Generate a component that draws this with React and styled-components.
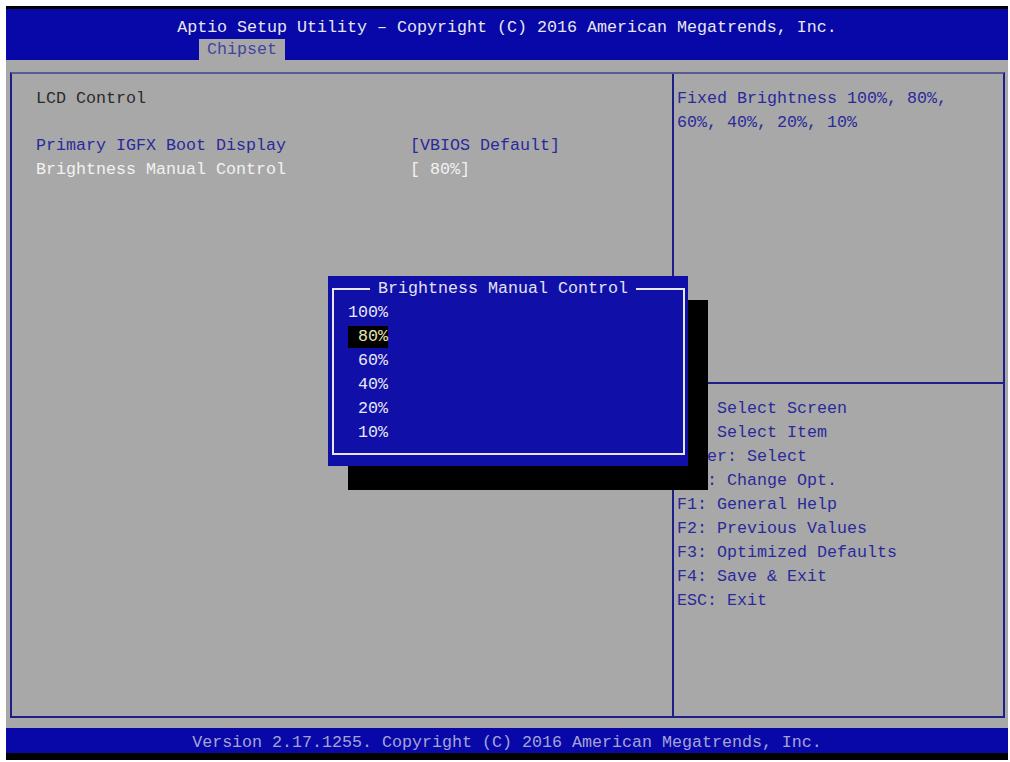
import React from "react";
import styled, { createGlobalStyle } from "styled-components";

const GlobalStyle = createGlobalStyle`
  html, body { margin: 0; padding: 0; background: #fff; }
  * { box-sizing: border-box; }
`;

const items = [
  { label: "Primary IGFX Boot Display", value: "[VBIOS Default]" },
  { label: "Brightness Manual Control", value: "[ 80%]", active: true },
];

const helpKeys = [
  "→←: Select Screen",
  "↑↓: Select Item",
  "Enter: Select",
  "+/-: Change Opt.",
  "F1: General Help",
  "F2: Previous Values",
  "F3: Optimized Defaults",
  "F4: Save & Exit",
  "ESC: Exit",
];

const options = ["100%", " 80%", " 60%", " 40%", " 20%", " 10%"];

const App = () => {
  return (
    <>
      <GlobalStyle />
      <Screen>
        <Header>
          <Title>Aptio Setup Utility – Copyright (C) 2016 American Megatrends, Inc.</Title>
          <Tab>Chipset</Tab>
        </Header>
        <Body>
          <Frame>
            <MainPanel>
              <SectionTitle>LCD Control</SectionTitle>
              <Settings>
                {items.map((it) => (
                  <React.Fragment key={it.label}>
                    <Label $active={it.active}>{it.label}</Label>
                    <Value $active={it.active}>{it.value}</Value>
                  </React.Fragment>
                ))}
              </Settings>
            </MainPanel>
            <SidePanel>
              <HelpText>
                Fixed Brightness 100%, 80%,
                <br />
                60%, 40%, 20%, 10%
              </HelpText>
              <KeyList>
                {helpKeys.map((k) => (
                  <KeyLine key={k}>{k}</KeyLine>
                ))}
              </KeyList>
            </SidePanel>
          </Frame>
        </Body>
        <Footer>Version 2.17.1255. Copyright (C) 2016 American Megatrends, Inc.</Footer>

        <Dialog>
          <DialogFrame>
            <DialogTitle>Brightness Manual Control</DialogTitle>
            {options.map((o) => (
              <Option key={o}>
                <OptionText $selected={o === " 80%"}>{o}</OptionText>
              </Option>
            ))}
          </DialogFrame>
        </Dialog>
      </Screen>
    </>
  );
};

export default App;

const Screen = styled.div`
  position: relative;
  margin: 6px 0 0 6px;
  width: 1002px;
  display: flex;
  flex-direction: column;
  font-family: "Liberation Mono", "DejaVu Sans Mono", monospace;
  font-size: 16.67px;
  line-height: 24px;
`;

const Header = styled.div`
  display: flex;
  flex-direction: column;
  align-items: center;
  background: #0808a8;
  border-top: 3px solid #000;
  padding-top: 8px;
`;

const Title = styled.div`
  color: #e6e6ee;
  line-height: 22px;
  white-space: pre;
`;

const Tab = styled.div`
  align-self: flex-start;
  margin-left: 193px;
  padding: 0 8px;
  height: 21px;
  line-height: 22px;
  background: #a8a8a8;
  color: #4444a0;
`;

const Body = styled.div`
  background: #a8a8a8;
  padding: 12px 3px 10px 4px;
`;

const Frame = styled.div`
  display: flex;
  height: 646px;
  border: 2px solid #1e1e88;
  border-top-color: #5a5a94;
`;

const MainPanel = styled.div`
  width: 662px;
  border-right: 2px solid #1e1e88;
  padding: 13px 0 0 24px;
`;

const SectionTitle = styled.div`
  color: #2a2a2a;
  margin-bottom: 23px;
`;

const Settings = styled.div`
  display: grid;
  grid-template-columns: 374px auto;
`;

const Label = styled.div`
  color: ${(p) => (p.$active ? "#f2f2f2" : "#2a2a9c")};
`;

const Value = styled.div`
  color: ${(p) => (p.$active ? "#f2f2f2" : "#2a2a9c")};
  white-space: pre;
`;

const SidePanel = styled.div`
  flex: 1;
  display: flex;
  flex-direction: column;
`;

const HelpText = styled.div`
  height: 310px;
  padding: 13px 0 0 3px;
  color: #2a2a9c;
  border-bottom: 2px solid #1e1e88;
`;

const KeyList = styled.div`
  padding: 13px 0 0 3px;
  color: #2a2a9c;
`;

const KeyLine = styled.div`
  white-space: pre;
`;

const Footer = styled.div`
  height: 32px;
  padding-top: 2px;
  line-height: 25px;
  text-align: center;
  background: #0808a8;
  border-bottom: 7px solid #000;
  color: #a4a4d4;
  white-space: pre;
`;

const Dialog = styled.div`
  position: absolute;
  left: 322px;
  top: 270px;
  width: 360px;
  height: 190px;
  display: flex;
  padding: 1px 3px 11px 4px;
  background: #1010a8;
  box-shadow: 20px 24px 0 #000;
`;

const DialogFrame = styled.fieldset`
  flex: 1;
  margin: 0;
  min-width: 0;
  padding: 0 0 10px 14px;
  border: 2px solid #e8e8f2;
`;

const DialogTitle = styled.legend`
  margin: 0 0 0 22px;
  padding: 0 8px;
  color: #e2e2f2;
  line-height: 24px;
`;

const Option = styled.div`
  height: 24px;
  display: flex;
  align-items: center;
`;

const OptionText = styled.span`
  white-space: pre;
  line-height: 22px;
  color: ${(p) => (p.$selected ? "#e8e4b0" : "#e8e8f2")};
  background: ${(p) => (p.$selected ? "#000" : "transparent")};
`;
